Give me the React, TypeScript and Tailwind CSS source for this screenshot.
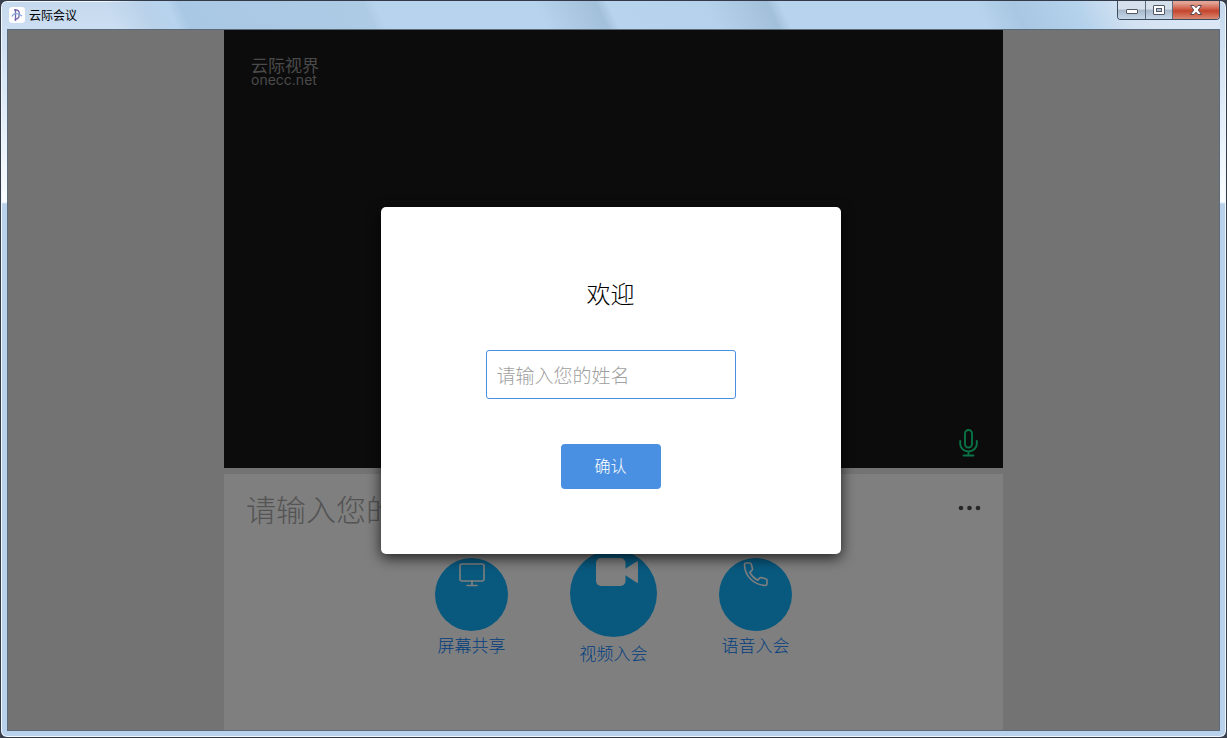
import React from 'react';

function LogoIcon() {
  return (
    <svg viewBox="0 0 16 16" className="h-4 w-4 shrink-0" aria-hidden="true">
      <rect width="16" height="16" rx="3" fill="#fdfcff" />
      <path d="M6.500 2v12M5 3h2.500C10.500 3.500 10.500 6 10 8c.5 2.500-1 4-4.500 4.500" fill="none" stroke="#7468ac" strokeWidth="1.300" />
      <path d="M3 9.500C4 6.500 8 5 13 9" fill="none" stroke="#7fa6d6" strokeWidth="1.200" />
    </svg>
  );
}

function TitleBar() {
  return (
    <header className="flex h-7 shrink-0 items-start justify-between bg-[linear-gradient(65deg,transparent_0%,transparent_9%,#b9d2ea_12%,#b7d3ee_14%,#a9c8e3_15%,#aecbe6_30%,#b7d3ee_31%,#b7d3ee_44%,#a3c0db_49%,#b7d3ee_50%,#b5d1ec_58%,#a3c0db_63%,#b7d3ee_64%,#b7d3ee_80%,#a9c7e2_83%,#b4d2ec_88%,#d3e2f2_92%,#dbe7f5_98%)]">
      <div className="flex h-7 items-center gap-1 pl-0.5">
        <LogoIcon />
        <h1 className="text-xs text-black">云际会议</h1>
      </div>
      <div className="flex h-[19px] overflow-hidden rounded-b border border-t-0 border-[#3d4b60]">
        <button aria-label="最小化" className="flex w-7 items-center justify-center border-r border-[#5d6c80] bg-linear-to-b from-[#d6e0eb] from-45% via-[#a7b7c9] via-50% to-[#c5d8ea]">
          <svg viewBox="0 0 14 12" className="h-3 w-3.5">
            <rect x="1.500" y="5.500" width="11" height="4" rx="0.500" fill="#fff" stroke="#525866" />
          </svg>
        </button>
        <button aria-label="最大化" className="flex w-[27px] items-center justify-center border-r border-[#5d6c80] bg-linear-to-b from-[#d6e0eb] from-45% via-[#a7b7c9] via-50% to-[#c5d8ea]">
          <svg viewBox="0 0 14 12" className="h-3 w-3.5">
            <rect x="1.500" y="1.500" width="11" height="9" rx="0.500" fill="#fff" stroke="#525866" />
            <rect x="4.500" y="4.500" width="5" height="3" fill="#b5c4d5" stroke="#525866" />
          </svg>
        </button>
        <button aria-label="关闭" className="flex w-[46px] items-center justify-center bg-linear-to-b from-[#e3a394] from-10% via-[#c4432c] via-55% to-[#da8770]">
          <svg viewBox="0 0 14 12" className="h-3 w-3.5">
            <path d="M1.500 1.500h3.500l2 2.200 2-2.200h3.500L9.300 6l3.200 4.500H9L7 8.300 5 10.500H1.500L4.700 6z" fill="#fff" stroke="#59444f" />
          </svg>
        </button>
      </div>
    </header>
  );
}

function ScreenIcon() {
  return (
    <svg viewBox="0 0 28 26" className="h-[26px] w-7" fill="none" stroke="#fff" strokeWidth="1.600" strokeLinecap="round" aria-hidden="true">
      <rect x="2" y="2" width="24" height="17" rx="2" />
      <path d="M14 19v4M9 23.500h10" />
    </svg>
  );
}

function CameraIcon() {
  return (
    <svg viewBox="0 0 42 28" className="h-7 w-[42px]" fill="#fff" aria-hidden="true">
      <rect width="29.500" height="28" rx="5" />
      <path d="M29 11 40.500 3.500q1.500-.8 1.500.8v19.400q0 1.600-1.500.8L29 17z" />
    </svg>
  );
}

function PhoneIcon() {
  return (
    <svg viewBox="0 0 26 26" className="h-[26px] w-[26px]" fill="none" stroke="#fff" strokeWidth="1.600" strokeLinejoin="round" aria-hidden="true">
      <path d="M3 1h3.700q1.300 0 1.600 1.300l1.200 4.400q.2 1-.6 1.700L6.800 10.300Q9.500 15.500 14.700 18.200l1.900-2.100q.7-.7 1.700-.5l4.400 1.200q1.300.3 1.300 1.600V21.500q0 2-2 2C10.500 22.500 1.800 14 1.500 3q0-2 1.500-2z" />
    </svg>
  );
}

type ActionProps = {
  label: string;
  icon: React.ReactNode;
  large?: boolean;
};

function Action({ label, icon, large = false }: ActionProps) {
  return (
    <button
      className={
        large
          ? 'flex flex-col items-center gap-1 text-[17px] leading-6 font-light text-[#0080ff]'
          : 'flex flex-col items-center gap-0.5 text-[17px] leading-6 font-light text-[#0080ff]'
      }
    >
      <span
        className={
          large
            ? 'flex h-[87px] w-[87px] justify-center rounded-full bg-[#12b2ff] pt-2 pl-1.5'
            : 'flex h-[73px] w-[73px] justify-center rounded-full bg-[#12b2ff] pt-1'
        }
      >
        {icon}
      </span>
      {label}
    </button>
  );
}

function VideoPane() {
  return (
    <section className="flex h-[438px] shrink-0 flex-col justify-between bg-[#181818] px-6 pt-7 pb-[11px]">
      <div className="flex flex-col pl-[3px] text-[#949494]">
        <span className="text-[17px] leading-[14px]">云际视界</span>
        <span className="font-['Inter','Noto_Sans_CJK_SC',sans-serif] text-sm leading-4">onecc.net</span>
      </div>
      <svg viewBox="0 0 20 28" className="h-7 w-5 self-end" fill="none" stroke="#12e48c" strokeWidth="1.900" strokeLinecap="round" role="img" aria-label="麦克风">
        <rect x="6" y="1" width="7" height="17.500" rx="3.500" />
        <path d="M1.200 12v3a8.300 7.500 0 0 0 16.600 0v-3M9.500 22.500v4M4.500 26.500h10" />
      </svg>
    </section>
  );
}

function JoinPane() {
  return (
    <section className="mt-1.5 flex flex-1 flex-col bg-white">
      <div className="flex h-[68px] shrink-0 items-center justify-between px-[22px]">
        <input
          aria-label="会议号"
          placeholder="请输入您的会议号"
          className="h-14 min-w-0 flex-1 bg-transparent text-3xl font-light outline-none placeholder:text-[#a8a8a8]"
        />
        <button aria-label="更多" className="w-6">
          <svg viewBox="0 0 24 6" className="h-1.5 w-6" fill="#505050">
            <circle cx="4" cy="3" r="2.300" />
            <circle cx="12.500" cy="3" r="2.300" />
            <circle cx="21" cy="3" r="2.300" />
          </svg>
        </button>
      </div>
      <div className="flex justify-center gap-[62px] pt-2">
        <div className="pt-2"><Action label="屏幕共享" icon={<ScreenIcon />} /></div>
        <Action label="视频入会" icon={<CameraIcon />} large />
        <div className="pt-2"><Action label="语音入会" icon={<PhoneIcon />} /></div>
      </div>
    </section>
  );
}

function WelcomeDialog() {
  return (
    <form
      role="dialog"
      aria-labelledby="welcome-title"
      onSubmit={(event) => event.preventDefault()}
      className="flex w-[460px] flex-col items-center rounded-[5px] bg-white px-8 pt-[66px] pb-[65px] shadow-[0_4px_14px_rgba(0,0,0,0.75)]"
    >
      <h2 id="welcome-title" className="text-2xl leading-10 font-light text-black">欢迎</h2>
      <input
        aria-label="姓名"
        placeholder="请输入您的姓名"
        className="mt-[37px] h-[49px] w-[250px] rounded-[3px] border border-[#4a90e2] px-2.5 text-[19px] font-light outline-none placeholder:text-[#a0a0a0]"
      />
      <button type="submit" className="mt-[45px] h-[45px] w-[100px] rounded-[4px] bg-[#4a90e2] pb-[3px] text-base font-light text-white">
        确认
      </button>
    </form>
  );
}

export default function App() {
  return (
    <div className="bg-[#39404c] font-['Noto_Sans_CJK_SC',sans-serif]">
      <div className="flex min-h-screen flex-col rounded-[7px] border border-[#333b48] bg-[linear-gradient(to_bottom,#c5d9ee_0,#dce9f7_90px,#fafdff_201px,#b9d1ea_203px,#b9d1ea_100%)] px-1.5 pb-1.5 inset-ring inset-ring-[#f2f8fe]">
        <TitleBar />
        <main className="relative flex flex-1 flex-col border border-[#e1edf8] bg-[#e6e6e6] outline -outline-offset-1 outline-[#5c6b7b]">
          <div className="mx-auto flex w-full max-w-[779px] flex-1 flex-col">
            <VideoPane />
            <JoinPane />
          </div>
          <div className="absolute inset-0 flex items-center justify-center bg-black/50 pr-1.5">
            <WelcomeDialog />
          </div>
        </main>
      </div>
    </div>
  );
}
